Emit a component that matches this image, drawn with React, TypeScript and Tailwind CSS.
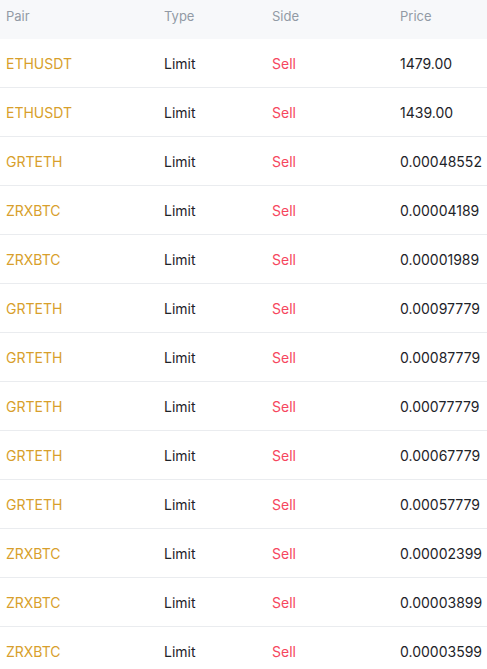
import React from 'react';

const rows = [
  ['ETHUSDT', '1479.00'],
  ['ETHUSDT', '1439.00'],
  ['GRTETH', '0.00048552'],
  ['ZRXBTC', '0.00004189'],
  ['ZRXBTC', '0.00001989'],
  ['GRTETH', '0.00097779'],
  ['GRTETH', '0.00087779'],
  ['GRTETH', '0.00077779'],
  ['GRTETH', '0.00067779'],
  ['GRTETH', '0.00057779'],
  ['ZRXBTC', '0.00002399'],
  ['ZRXBTC', '0.00003899'],
  ['ZRXBTC', '0.00003599'],
];

export default function App() {
  return (
    <div className="w-[487px] bg-white font-['Inter','Roboto',sans-serif] text-[14px]">
      {/* header */}
      <div className="grid grid-cols-[158px_108px_128px_1fr] h-[39px] items-center pb-[6px] pl-[6px] bg-[#f7f8fa] text-[13px] text-[#929aa5]">
        <span>Pair</span>
        <span>Type</span>
        <span>Side</span>
        <span>Price</span>
      </div>
      {rows.map(([pair, price], i) => (
        <div
          key={i}
          className="grid grid-cols-[158px_108px_128px_1fr] h-[49px] items-center pl-[6px] border-b border-[#eaecef]"
        >
          <span className="text-[#d89f2c]">{pair}</span>
          <span className="text-[#1e2329]">Limit</span>
          <span className="text-[#f6465d]">Sell</span>
          <span className="text-[#1e2329]">{price}</span>
        </div>
      ))}
    </div>
  );
}
